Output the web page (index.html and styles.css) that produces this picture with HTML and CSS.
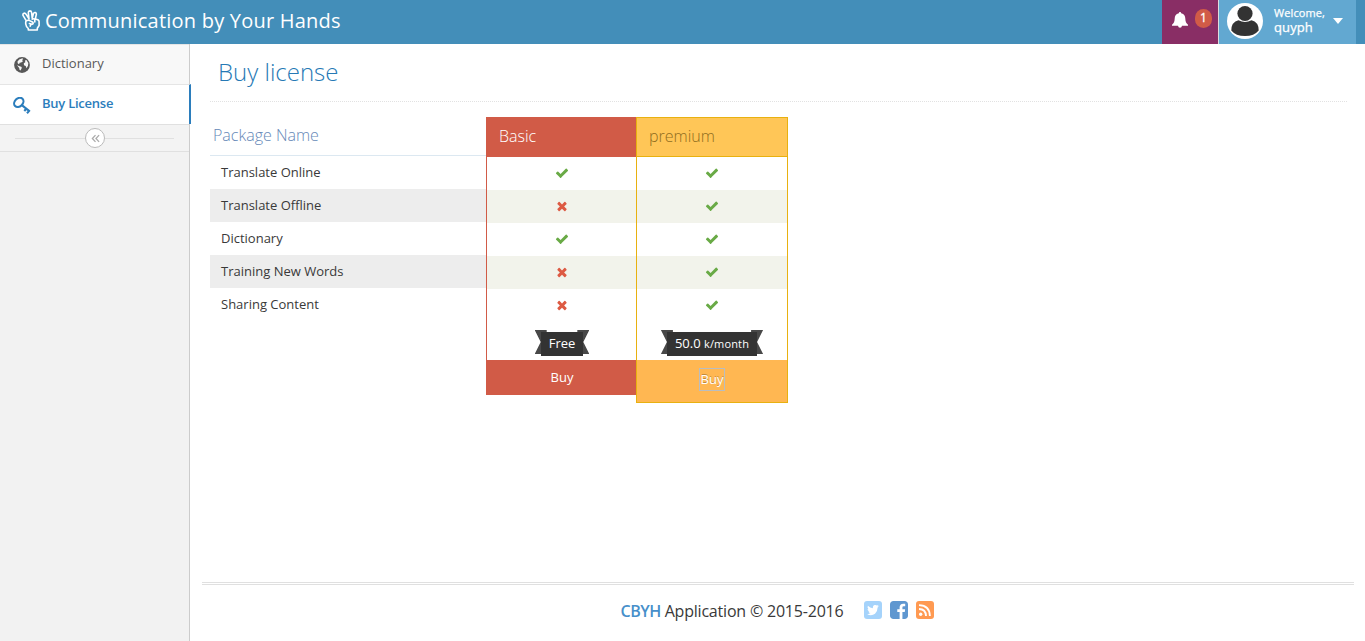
FILE: index.html
```html
<!DOCTYPE html>
<html lang="en">
<head>
<meta charset="utf-8">
<title>Buy license</title>
<link rel="stylesheet" href="styles.css">
</head>
<body>
<svg class="defs" aria-hidden="true">
  <symbol id="check" viewBox="0 0 1792 1792"><path d="M1671 566q0 40-28 68l-724 724-136 136q-28 28-68 28t-68-28l-136-136-362-362q-28-28-28-68t28-68l136-136q28-28 68-28t68 28l294 295 656-657q28-28 68-28t68 28l136 136q28 28 28 68z"/></symbol>
  <symbol id="times" viewBox="0 0 1792 1792"><path d="M1490 1322q0 40-28 68l-136 136q-28 28-68 28t-68-28l-294-294-294 294q-28 28-68 28t-68-28l-136-136q-28-28-28-68t28-68l294-294-294-294q-28-28-28-68t28-68l136-136q28-28 68-28t68 28l294 294 294-294q28-28 68-28t68 28l136 136q28 28 28 68t-28 68l-294 294 294 294q28 28 28 68z"/></symbol>
</svg>
<header class="navbar">
  <a class="brand">
    <svg class="brand-icon" viewBox="0 0 18 21" fill="none" stroke="#fff" stroke-width="1.600" stroke-linejoin="round" stroke-linecap="round"><path d="M4.300 10.800 1 5.400Q.6 3.700 2 3.200 3.300 3 4.200 4.400L7 8.800 6.300 2.600Q6.300 1 7.900.9 9.400.9 9.600 2.600L10.200 8.200 11.400 3.600Q12 2.300 13.300 2.600 14.600 3.100 14.300 4.500L13.300 9Q17 9.500 17.100 11.500V15.500L15.300 18.300V20H6.300V18.500Q4 16.600 3.900 14.500 3.300 12 4.300 10.800 5.800 9.800 7.600 10.600L10.900 12.300Q11.600 13.900 10 14.200L7.400 13.500M10.300 9.200Q11.800 8.200 12.800 9.500V12M9.500 14.300Q8.300 15 8.200 16.300"/></svg>
    <span>Communication by Your Hands</span>
  </a>
  <div class="nav-right">
    <a class="notice">
      <svg class="bell" viewBox="0 0 16 16"><path fill="#fff" d="M8 0q1.200 0 1.200 1.300C12.300 2 13.200 4.200 13.300 6.500c.1 3 .8 4.800 2.700 6.300v1H10q-.3 2-2 2t-2-2H0v-1C1.900 11.300 2.600 9.500 2.700 6.500 2.800 4.200 3.700 2 6.800 1.300Q6.800 0 8 0z"/></svg>
      <span class="count">1</span>
    </a>
    <a class="user">
      <svg class="avatar" viewBox="0 0 36 36"><circle cx="18" cy="18" r="18" fill="#fff"/><circle cx="18" cy="10.500" r="7.600" fill="#333"/><path fill="#333" d="M4.300 27.500q0-8.500 7.200-10.200 6.500 3.600 13 0 7.200 1.700 7.200 10.200Q27.200 33 18 33T4.300 27.500z"/></svg>
      <span class="who"><small>Welcome,</small>quyph</span>
      <i class="caret"></i>
    </a>
  </div>
</header>
<div class="shell">
  <nav class="sidebar">
    <a class="item">
      <svg class="globe" viewBox="0 0 16 16"><circle cx="8" cy="8" r="7.900" fill="#585858"/><path fill="#f8f8f8" d="M5.200 2.400 8.500 1.300 9.200 2.200 8 3 9 4.200 7.200 5.600 5.600 5.800 5.200 6.900 4 6.700 3.400 4.800zM3 8.300 5 8.900 7.700 10 7.600 11.600 6.500 13.600 5.500 12.700 5.200 11zM11 3.400 12.400 3.100 14.300 6 14 8.800 12.500 11.200 11.700 8.900 10 8.200 9.800 6.300 11.300 5.200z"/></svg>
      <span>Dictionary</span>
    </a>
    <a class="item active">
      <svg class="key" viewBox="0 0 18 17" fill="none" stroke="#2b7dbc"><ellipse cx="5.800" cy="5.400" rx="5.200" ry="4" transform="rotate(-45 5.800 5.400)" stroke-width="2.100"/><path d="M8.500 7.900 16.700 14.300M11.300 14 13.900 11M14 16.200 16.800 13.100" stroke-width="2.100"/></svg>
      <span>Buy License</span>
    </a>
    <div class="toggle"><span class="toggle-btn"><svg viewBox="0 0 10 10" fill="none" stroke="#aaa" stroke-width="1.400"><path d="M5 1.200 1.500 5 5 8.800M9 1.200 5.500 5 9 8.800"/></svg></span></div>
  </nav>
  <main class="content">
    <h1>Buy license</h1>
    <section class="pricing">
      <div class="features">
        <h3>Package Name</h3>
        <ul><li>Translate Online</li><li>Translate Offline</li><li>Dictionary</li><li>Training New Words</li><li>Sharing Content</li></ul>
      </div>
      <div class="plan basic">
        <h3>Basic</h3>
        <ul>
          <li><svg class="yes"><use href="#check"/></svg></li>
          <li><svg class="no"><use href="#times"/></svg></li>
          <li><svg class="yes"><use href="#check"/></svg></li>
          <li><svg class="no"><use href="#times"/></svg></li>
          <li><svg class="no"><use href="#times"/></svg></li>
        </ul>
        <div class="price"><span class="ribbon"><b>Free</b></span></div>
        <div class="buy"><a>Buy</a></div>
      </div>
      <div class="plan premium">
        <h3>premium</h3>
        <ul>
          <li><svg class="yes"><use href="#check"/></svg></li>
          <li><svg class="yes"><use href="#check"/></svg></li>
          <li><svg class="yes"><use href="#check"/></svg></li>
          <li><svg class="yes"><use href="#check"/></svg></li>
          <li><svg class="yes"><use href="#check"/></svg></li>
        </ul>
        <div class="price"><span class="ribbon"><b>50.0 <small>k/month</small></b></span></div>
        <div class="buy"><a>Buy</a></div>
      </div>
    </section>
    <footer class="footer">
      <span><strong>CBYH</strong> Application © 2015-2016</span>
      <div class="social">
        <svg viewBox="0 0 18 18"><rect width="18" height="18" rx="3" fill="#a5d3fb"/><path fill="#fff" d="M14.900 5.200 13.600 6.500Q13.600 10.500 11 12.700 7.600 15.300 3.200 13.200 5.200 13.200 6.600 12.100 4.900 11.900 4.400 10.400H5.400Q3.600 9.700 3.500 7.900L4.500 8.200Q2.900 6.700 3.900 4.800 6 7.200 8.900 7.300 8.500 4.300 11 3.900 12.200 3.800 13 4.600L14.500 4.100 13.600 5.400z"/></svg>
        <svg viewBox="128 128 1536 1536"><path fill="#5f97d0" d="M1376 128q119 0 203.500 84.500t84.500 203.500v960q0 119-84.500 203.500t-203.500 84.500h-188v-595h199l30-232h-229v-148q0-56 23.500-84t91.500-28l122-1v-207q-63-9-178-9-136 0-217.500 80t-81.500 226v171h-200v232h200v595h-532q-119 0-203.500-84.500t-84.500-203.500v-960q0-119 84.500-203.500t203.500-84.500h960z"/></svg>
        <svg viewBox="0 0 18 18"><rect width="18" height="18" rx="3" fill="#ff9a52"/><circle cx="4.700" cy="13.300" r="1.700" fill="#fff"/><path fill="none" stroke="#fff" stroke-width="1.900" d="M3 8Q9.800 8.200 10 15M3 4.100Q13.600 4.400 13.900 15"/></svg>
      </div>
    </footer>
  </main>
</div>
</body>
</html>
```
FILE: styles.css
```css
* { box-sizing: border-box; }
body { margin: 0; height: 641px; overflow: hidden; background: #fff; font: 13px/20px "Open Sans", sans-serif; color: #393939; display: flex; flex-direction: column; }
h1, h3, ul { margin: 0; padding: 0; list-style: none; }
h1, h3 { font-weight: 300; }
svg { display: block; flex: none; }
.defs { position: absolute; width: 0; height: 0; }
.navbar { height: 44px; flex: none; background: #438eb9; display: flex; justify-content: space-between; padding: 0 9px 0 22px; color: #fff; }
.brand { display: flex; align-items: flex-start; gap: 5px; font-size: 20px; line-height: 42px; letter-spacing: .22px; }
.brand-icon { width: 18px; height: 21px; margin-top: 10px; }
.nav-right { display: flex; }
.notice { width: 56px; background: #892e65; display: flex; padding: 9px 0 0 10px; gap: 7px; }
.bell { width: 16px; height: 16px; margin-top: 3px; }
.count { width: 17px; height: 19px; border-radius: 9px; background: #d15b47; font-size: 12px; line-height: 18px; text-align: center; -webkit-text-stroke: .3px #fff; }
.user { width: 138px; border-left: 1px solid #ddd; background: #62a8d1; display: flex; padding: 3px 0 0 8px; }
.avatar { width: 36px; height: 36px; }
.who { display: flex; flex-direction: column; width: 70px; padding: 3px 0 0 11px; line-height: 15px; font-size: 13px; letter-spacing: .1px; -webkit-text-stroke: .25px #fff; }
.who small { font-size: 11px; line-height: 14px; }
.caret { margin-top: 15px; height: 6px; border: 5px solid transparent; border-top: 6px solid #fff; border-bottom: 0; }
.shell { flex: 1; display: flex; }
.sidebar { width: 190px; background: #f2f2f2; border-right: 1px solid #ccc; }
.item { display: flex; align-items: center; height: 40px; border-top: 1px solid #e5e5e5; background: #f8f8f8; color: #585858; padding: 0 0 3px 14px; }
.item svg { margin-top: 3px; }
.globe { width: 16px; height: 16px; margin-right: 12px; }
.item .key { width: 18px; height: 17px; margin: 4px 11px 0 -1px; }
.active { width: 191px; position: relative; left: 0; background: #fff; color: #2b7dbc; font-weight: 600; letter-spacing: -.25px; border-right: 2px solid #2b7dbc; }
.toggle { height: 28px; border: solid #e0e0e0; border-width: 1px 0; background: linear-gradient(#e0e0e0, #e0e0e0) 15px 13px / 159px 1px no-repeat #f3f3f3; padding: 3px 0 0 85px; }
.toggle-btn { display: flex; width: 20px; height: 20px; border: 1px solid #bbb; border-radius: 50%; background: #fff; align-items: center; justify-content: center; }
.toggle-btn svg { width: 9px; height: 9px; }
.content { flex: 1; display: flex; flex-direction: column; padding: 0 11px 0 12px; }
h1 { margin: 0 7px 15px 8px; height: 58px; border-bottom: 1px dotted #e2e2e2; padding-left: 8px; font-size: 24px; line-height: 55px; color: #2679b5; }
.pricing { display: flex; align-items: flex-start; margin-left: 8px; }
.features { width: 276px; }
.features h3 { height: 39px; padding-left: 3px; line-height: 36px; border-bottom: 1px solid #dce8f1; color: #6688b7; }
h3 { font-size: 16px; }
.features li { height: 33px; padding-left: 11px; line-height: 33px; }
.features li:nth-child(even) { background: #ededed; }
.plan { border: 1px solid #d15b47; border-top: 0; width: 151px; }
.basic { width: 150px; border-right: 0; border-bottom: 0; }
.plan h3 { height: 40px; margin-left: -1px; padding-left: 13px; line-height: 38px; background: #d15b47; color: #fff; }
.plan li { height: 33px; display: flex; justify-content: center; padding: 9px 0 0 1px; }
.plan li:nth-child(even) { background: #f2f3eb; }
.plan li svg { width: 14px; height: 14px; }
.yes { fill: #69aa46; }
.no { fill: #dd5a43; }
.price { height: 38px; display: flex; justify-content: center; padding: 10px 0 0 1px; }
.ribbon { position: relative; height: 24px; }
.ribbon b { display: block; position: relative; z-index: 1; background: #333; color: #fff; font-weight: 400; line-height: 22px; height: 24px; padding: 0 8px; white-space: nowrap; }
.ribbon small { font-size: 11px; letter-spacing: .15px; }
.ribbon::before, .ribbon::after { content: ""; position: absolute; top: -2px; width: 12px; height: 24px; background: #484848; }
.ribbon::before { left: -6px; clip-path: polygon(0 0, 100% 0, 100% 100%, 0 100%, 50% 50%); }
.ribbon::after { right: -6px; clip-path: polygon(0 0, 100% 0, 50% 50%, 100% 100%, 0 100%); }
.buy { display: flex; justify-content: center; height: 35px; padding: 7px 0 0 2px; background: #d15b47; color: #fff; margin-left: -1px; }
.premium { width: 152px; border-color: #e8b110; }
.premium h3 { margin: 0; padding-left: 12px; background: #ffc657; border: solid #e8b110; border-width: 1px 0; line-height: 36px; color: #8f6d20; }
.premium li { padding-left: 0; padding-right: 1px; }
.premium .price { padding-left: 0; }
.premium .buy { background: #ffb752; height: 42px; margin: 0; padding: 8px 0 0; }
.premium .buy a { width: 26px; height: 23px; border: 1px solid #b9bdc0; line-height: 21px; text-align: center; white-space: nowrap; text-shadow: 0 -1px 0 rgba(0,0,0,.25); }
.footer { margin-top: auto; height: 59px; border-top: 3px double #e0e0e0; display: flex; justify-content: center; font-size: 16px; line-height: 52px; padding-right: 2px; gap: 20px; letter-spacing: -.2px; }
.footer strong { color: #478fca; font-weight: 600; letter-spacing: -.5px; }
.social { display: flex; gap: 8px; padding-top: 16px; }
.social svg { width: 18px; height: 18px; }
```
